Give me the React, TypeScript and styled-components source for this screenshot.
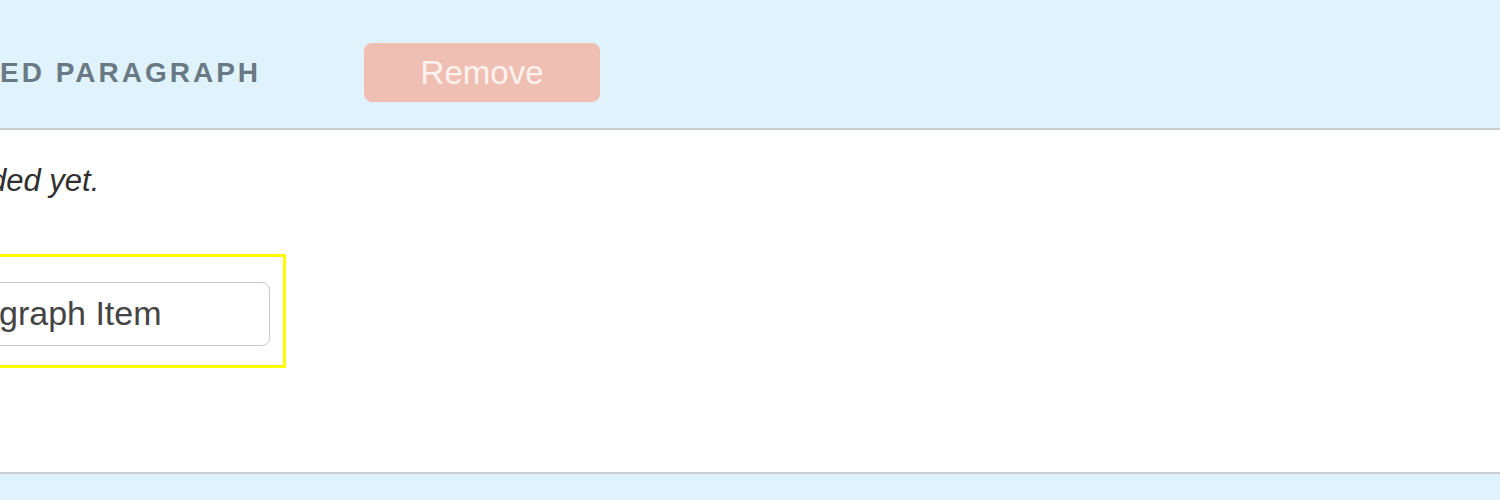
import React from "react";
import styled, { createGlobalStyle } from "styled-components";

const GlobalStyle = createGlobalStyle`
  html, body {
    margin: 0;
    padding: 0;
    background: #ffffff;
    overflow: hidden;
  }
  body {
    font-family: "Liberation Sans", Arial, Helvetica, sans-serif;
  }
`;

const Page = styled.div`
  width: 1500px;
  height: 500px;
  display: flex;
  flex-direction: column;
  overflow: hidden;
  background: #ffffff;
`;

const HeaderBar = styled.div`
  height: 130px;
  box-sizing: border-box;
  padding-top: 17px;
  display: flex;
  flex-direction: row;
  align-items: center;
  background: #e0f3fd;
  border-bottom: 2px solid #cacdcf;
  flex-shrink: 0;
`;

const Title = styled.h3`
  margin: 0;
  font-size: 28px;
  font-weight: bold;
  letter-spacing: 3px;
  text-transform: uppercase;
  color: #6a7a85;
`;

const RemoveButton = styled.button`
  width: 236px;
  height: 59px;
  margin-left: 103px;
  padding: 0;
  border: none;
  border-radius: 8px;
  outline: none;
  background: #f0bfb3;
  color: #fdf2ef;
  font-family: "Liberation Sans", Arial, sans-serif;
  font-size: 33px;
  cursor: pointer;
`;

const Body = styled.div`
  flex: 1;
  display: flex;
  flex-direction: column;
  align-items: flex-start;
  padding-top: 34px;
  border-bottom: 2px solid #cacdcf;
`;

const EmptyNote = styled.p`
  margin: 0 0 0 -11px;
  font-size: 31px;
  font-style: italic;
  line-height: 34px;
  color: #2f2f2f;
`;

const Highlight = styled.div`
  width: 306px;
  height: 114px;
  margin-top: 56px;
  margin-left: -20px;
  box-sizing: border-box;
  border: 3px solid #ffff00;
  padding: 25px 13px 0 0;
`;

const ItemInput = styled.input`
  width: 100%;
  height: 64px;
  box-sizing: border-box;
  border: 1px solid #c9c9c9;
  border-radius: 8px;
  outline: none;
  padding: 0 0 2px 15px;
  background: #ffffff;
  color: #444444;
  font-family: "Liberation Sans", Arial, sans-serif;
  font-size: 34px;
`;

const FooterBar = styled.div`
  height: 26px;
  background: #e0f3fd;
  flex-shrink: 0;
`;

export default () => {
  return (
    <Page>
      <GlobalStyle />
      <HeaderBar>
        <Title>ed paragraph</Title>
        <RemoveButton>Remove</RemoveButton>
      </HeaderBar>
      <Body>
        <EmptyNote>ded yet.</EmptyNote>
        <Highlight>
          <ItemInput readOnly value="graph Item" />
        </Highlight>
      </Body>
      <FooterBar />
    </Page>
  );
};
